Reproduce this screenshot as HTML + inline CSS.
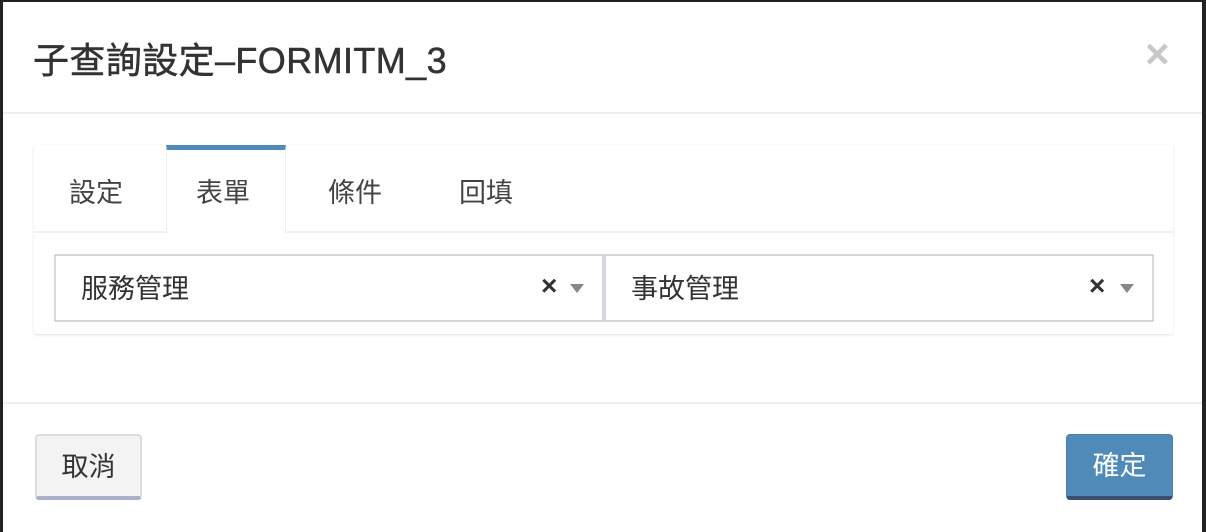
<!DOCTYPE html>
<html><head><meta charset="utf-8"><style>
*{box-sizing:border-box;margin:0;padding:0}
html,body{width:1206px;height:532px;overflow:hidden}
body{background:#222;font-family:"Liberation Sans","Noto Sans CJK TC",sans-serif;color:#333;position:relative}
.modal{position:absolute;left:3px;top:2px;width:1199px;height:530px;background:#fff}
.title{position:absolute;left:30px;top:30px;font-size:36px;color:#333;letter-spacing:0.4px;-webkit-text-stroke:0.5px #333}
.close{position:absolute;left:1142px;top:28px;font-size:42px;color:#c8c8c8;font-weight:bold}
.hl{position:absolute;left:0;width:1199px;height:2px;background:#eee}
.panel{position:absolute;left:31px;top:143px;width:1139px;height:189px;background:#fff;box-shadow:0 1px 3px rgba(0,0,0,.12);border-radius:3px}
.tabbar{position:absolute;left:0;top:0;width:100%;height:88px;border-bottom:2px solid #f0f0f0}
.tab{position:absolute;top:26px;font-size:27px;color:#444}
.active{position:absolute;left:132px;top:0;width:120px;height:88px;border-top:5px solid #4f8ab8;border-left:1px solid #f0f0f0;border-right:1px solid #f0f0f0;background:#fff}
.sel{position:absolute;top:109px;height:68px;border:2px solid #d5d9df;background:#fff}
.sel span{position:absolute;left:25px;top:11px;font-size:27px;color:#333}
.x{position:absolute;top:14px;font-size:28px;font-weight:bold;color:#333}
.arr{position:absolute;top:28px;width:0;height:0;border-left:7px solid transparent;border-right:7px solid transparent;border-top:9px solid #888}
.btn{position:absolute;top:432px;height:66px;border-radius:4px;font-size:27px;text-align:center;line-height:62px}
</style></head><body>
<div class="modal">
<div class="title">子查詢設定–FORMITM_3</div>
<div class="close">×</div>
<div class="hl" style="top:110px"></div>
<div class="panel">
 <div class="tabbar">
  <div class="active"></div>
  <div class="tab" style="left:35px">設定</div>
  <div class="tab" style="left:162px">表單</div>
  <div class="tab" style="left:294px">條件</div>
  <div class="tab" style="left:425px">回填</div>
 </div>
 <div class="sel" style="left:20px;width:550px"><span>服務管理</span><div class="x" style="left:485px">×</div><div class="arr" style="left:514px"></div></div>
 <div class="sel" style="left:570px;width:550px"><span>事故管理</span><div class="x" style="left:483px">×</div><div class="arr" style="left:514px"></div></div>
</div>
<div class="hl" style="top:400px"></div>
<div class="btn" style="left:32px;width:107px;background:#f3f3f3;border:2px solid #dcdcdc;border-bottom:4px solid #aab0c8;color:#333">取消</div>
<div class="btn" style="left:1063px;width:107px;background:#4f8ab8;border:1px solid #4a80ac;border-bottom:4px solid #3c4f73;color:#fff">確定</div>
</div>
</body></html>
